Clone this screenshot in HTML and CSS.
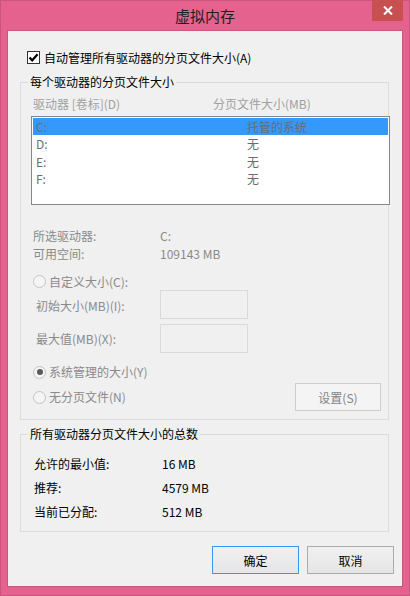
FILE: index.html
```html
<!DOCTYPE html>
<html>
<head>
<meta charset="utf-8">
<title>虚拟内存</title>
<link rel="stylesheet" href="styles.css">
</head>
<body>
<div class="window">
  <div class="titlebar">
    <span class="title">虚拟内存</span>
    <div class="close">
      <svg width="10" height="9" viewBox="0 0 10 9"><path d="M1 0.5 L9 8.5 M9 0.5 L1 8.5" stroke="#fff" stroke-width="2"/></svg>
    </div>
  </div>
  <div class="client">
    <div class="auto-row">
      <span class="checkbox"><svg width="11" height="11" viewBox="0 0 11 11"><path d="M1.5 5.5 L4.2 8.3 L9.6 2.2" fill="none" stroke="#000" stroke-width="2.2"/></svg></span>
      <span class="auto-label">自动管理所有驱动器的分页文件大小(A)</span>
    </div>

    <div class="group group-drives">
      <span class="legend">每个驱动器的分页文件大小</span>
      <div class="col-head"><span class="col-a">驱动器 [卷标](D)</span><span>分页文件大小(MB)</span></div>
      <div class="list">
        <div class="list-row selected"><span class="col-drive">C:</span><span>托管的系统</span></div>
        <div class="list-row"><span class="col-drive">D:</span><span>无</span></div>
        <div class="list-row"><span class="col-drive">E:</span><span>无</span></div>
        <div class="list-row"><span class="col-drive">F:</span><span>无</span></div>
      </div>
      <div class="info">
        <div class="info-row"><span class="info-key">所选驱动器:</span><span>C:</span></div>
        <div class="info-row"><span class="info-key">可用空间:</span><span>109143 MB</span></div>
      </div>
      <div class="radio-row r-custom"><span class="radio"></span><span>自定义大小(C):</span></div>
      <div class="field-row"><span class="field-label f-first">初始大小(MB)(I):</span><span class="textbox"></span></div>
      <div class="field-row f2"><span class="field-label">最大值(MB)(X):</span><span class="textbox"></span></div>
      <div class="radio-row r-system"><span class="radio checked"></span><span>系统管理的大小(Y)</span></div>
      <div class="last-row">
        <div class="radio-row"><span class="radio"></span><span>无分页文件(N)</span></div>
        <span class="btn btn-disabled">设置(S)</span>
      </div>
    </div>

    <div class="group group-total">
      <span class="legend">所有驱动器分页文件大小的总数</span>
      <div class="totals">
        <div class="total-row"><span class="total-key">允许的最小值:</span><span>16 MB</span></div>
        <div class="total-row"><span class="total-key">推荐:</span><span>4579 MB</span></div>
        <div class="total-row"><span class="total-key">当前已分配:</span><span>512 MB</span></div>
      </div>
    </div>

    <div class="buttons">
      <span class="btn btn-default">确定</span>
      <span class="btn">取消</span>
    </div>
  </div>
</div>
</body>
</html>
```

FILE: styles.css
```css
* { box-sizing: border-box; }
html, body { margin: 0; padding: 0; }
body {
  width: 410px;
  height: 596px;
  font-family: "Noto Sans CJK SC", "Microsoft YaHei", sans-serif;
  font-size: 12px;
  color: #000;
  background: #e6628e;
}
.window {
  position: relative;
  width: 410px;
  height: 596px;
  border: 1px solid #c9567f;
  background: #e6628e;
}
.titlebar {
  height: 29px;
  display: flex;
  justify-content: center;
  align-items: center;
}
.title {
  font-size: 15px;
  line-height: 29px;
  color: #1e1e1e;
  letter-spacing: 0;
}
.close {
  position: absolute;
  top: -1px;
  left: 371px;
  width: 31px;
  height: 21px;
  background: #c75050;
  display: flex;
  align-items: center;
  justify-content: center;
}
.client {
  margin-left: 6px;
  width: 396px;
  height: 557px;
  border: 1px solid #c9567f;
  background: #f0f0f0;
  display: flex;
  flex-direction: column;
}
.auto-row {
  margin-top: 20px;
  padding-left: 19px;
  height: 13px;
  display: flex;
  align-items: center;
}
.checkbox {
  width: 13px;
  height: 13px;
  border: 1px solid #333;
  background: #fff;
  display: flex;
  flex-shrink: 0;
}
.auto-label {
  margin-left: 4px;
  line-height: 16px;
}
.group {
  position: relative;
  margin-left: 12px;
  width: 369px;
  border: 1px solid #dcdcdc;
  display: flex;
  flex-direction: column;
}
.group-drives {
  margin-top: 18px;
  height: 338px;
}
.group-total {
  margin-top: 14px;
  height: 98px;
}
.legend {
  position: absolute;
  top: -9px;
  left: 7px;
  padding: 0 2px;
  line-height: 16px;
  background: #f0f0f0;
  color: #000;
}
.col-head {
  margin-top: 13px;
  padding-left: 12px;
  height: 16px;
  line-height: 16px;
  display: flex;
  color: #a0a0a0;
}
.col-a { width: 180px; }
.list {
  margin-top: 4px;
  margin-left: 10px;
  width: 359px;
  height: 89px;
  border: 1px solid #828790;
  background: #fff;
  padding: 1px;
  color: #6d6d6d;
}
.list-row {
  height: 17.5px;
  line-height: 17.5px;
  padding-left: 3px;
  display: flex;
}
.list-row.selected {
  height: 17px;
  background: #3399ff;
}
.col-drive { width: 211px; }
.info {
  margin-top: 22px;
  padding-left: 12px;
  color: #8a8a8a;
}
.info-row {
  height: 18px;
  line-height: 18px;
  display: flex;
}
.info-key { width: 127px; }
.radio-row {
  padding-left: 12px;
  height: 18px;
  line-height: 18px;
  display: flex;
  align-items: center;
  color: #8a8a8a;
}
.r-custom { margin-top: 10px; height: 17px; }
.r-system { margin-top: 10px; }
.radio {
  width: 13px;
  height: 13px;
  border-radius: 50%;
  border: 1px solid #c4c4c4;
  background: #f4f4f4;
  margin-right: 3px;
  flex-shrink: 0;
  display: flex;
  align-items: center;
  justify-content: center;
}
.radio.checked::after {
  content: "";
  width: 6px;
  height: 6px;
  border-radius: 50%;
  background: #5a5a5a;
}
.field-row {
  padding-left: 15px;
  height: 29px;
  display: flex;
  align-items: center;
  color: #8a8a8a;
}
.f2 { margin-top: 5px; }
.field-label {
  width: 124px;
  line-height: 18px;
}
.f-first { padding-top: 3px; }
.textbox {
  width: 88px;
  height: 29px;
  border: 1px solid #d9d9d9;
  background: #f0f0f0;
}
.last-row {
  margin-top: 2px;
  height: 28px;
  display: flex;
  align-items: center;
  justify-content: space-between;
  padding-right: 7px;
}
.btn {
  width: 87px;
  height: 28px;
  border: 1px solid #acacac;
  background: linear-gradient(#f0f0f0, #e5e5e5);
  display: flex;
  align-items: center;
  justify-content: center;
  color: #000;
}
.btn-disabled {
  width: 86px;
  border-color: #cdcdcd;
  background: #f4f4f4;
  color: #838383;
}
.btn-default {
  border-color: #3399ff;
}
.totals {
  margin-top: 17px;
  padding-left: 13px;
}
.total-row {
  height: 24px;
  line-height: 24px;
  display: flex;
}
.total-key { width: 128px; }
.buttons {
  margin-top: 14px;
  padding-right: 8px;
  display: flex;
  justify-content: flex-end;
  gap: 8px;
}
```
